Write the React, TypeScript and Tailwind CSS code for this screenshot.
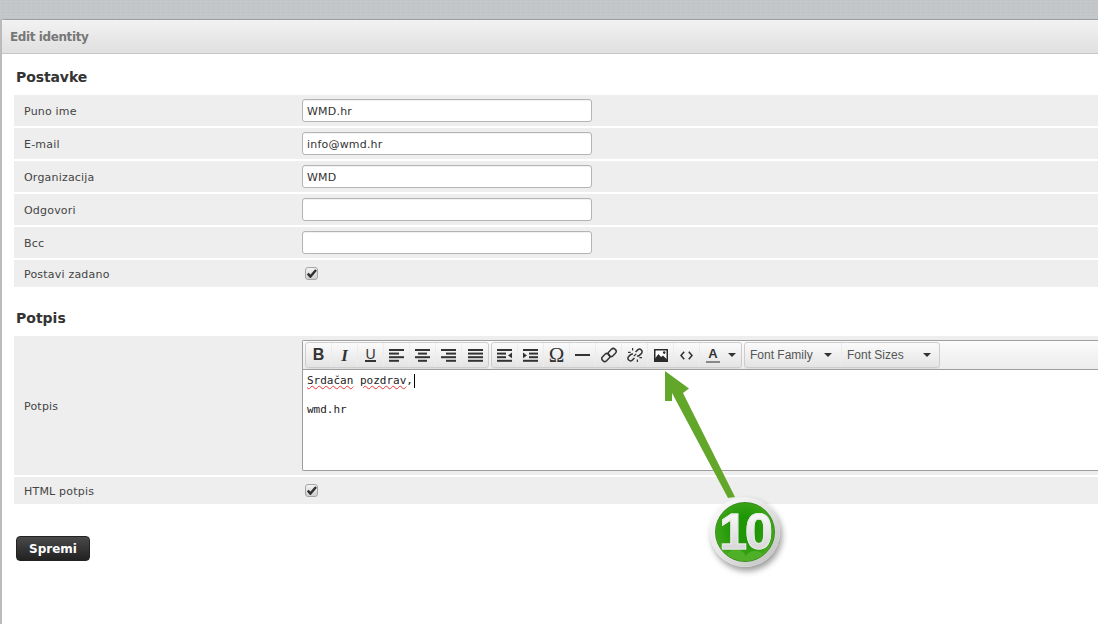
const fields = [
  { label: "Puno ime", value: "WMD.hr" },
  { label: "E-mail", value: "info@wmd.hr" },
  { label: "Organizacija", value: "WMD" },
  { label: "Odgovori", value: "" },
  { label: "Bcc", value: "" },
];

const labelCls = "pl-[10px] pt-[4px] text-[11px] tracking-[0.2px] text-[#444]";
const groupCls = "flex rounded-[3px] border border-[#cdcdcd] bg-gradient-to-b from-[#fbfbfb] to-[#e4e4e4] shadow-[0_1px_0_rgba(0,0,0,0.05)]";

const Check = () => (
  <span className="flex h-[13px] w-[13px] items-center justify-center rounded-[3px] border border-[#a5a5a5] bg-gradient-to-b from-[#f4f4f4] to-[#cfcfcf]">
    <svg width="10" height="9" viewBox="0 0 10 9">
      <path d="M0.8 4.6 L3.4 7.6 L9 1" fill="none" stroke="#2f2f2f" strokeWidth="2.4" />
    </svg>
  </span>
);

const ToolBtn = ({ children, w = "w-[26px]" }: { children: React.ReactNode; w?: string }) => (
  <div className={`flex h-[24px] ${w} items-center justify-center border-r border-[#ececec] text-[#333] last:border-r-0`}>{children}</div>
);

// bar icons: widths of the 4 rows and how they line up
const Align = ({ rows, side }: { rows: number[]; side: "l" | "c" | "r" }) => (
  <svg width="15" height="13" viewBox="0 0 15 13" fill="#333">
    {rows.map((w, i) => (
      <rect key={i} x={side === "l" ? 0 : side === "c" ? (15 - w) / 2 : 15 - w} y={i * 3.6} width={w} height="2" />
    ))}
  </svg>
);

const Indent = ({ flip }: { flip?: boolean }) => (
  <svg width="15" height="13" viewBox="0 0 15 13" fill="#333">
    <rect x="0" y="0" width="15" height="2" />
    <rect x={flip ? 6 : 0} y="3.6" width="9" height="2" />
    <rect x={flip ? 6 : 0} y="7.2" width="9" height="2" />
    <rect x="0" y="10.8" width="15" height="2" />
    <path d={flip ? "M0 3.5 L4 6.4 L0 9.3 Z" : "M15 3.5 L11 6.4 L15 9.3 Z"} />
  </svg>
);

const LinkIcon = () => (
  <svg width="16" height="16" viewBox="0 0 16 16" fill="none" stroke="#333" strokeWidth="1.5">
    <rect x="8.4" y="1.2" width="5.6" height="8.6" rx="2.6" transform="rotate(45 11.2 5.5)" />
    <rect x="2" y="6.2" width="5.6" height="8.6" rx="2.6" transform="rotate(45 4.8 10.5)" />
  </svg>
);

const UnlinkIcon = () => (
  <svg width="16" height="16" viewBox="0 0 16 16" fill="none" stroke="#333" strokeWidth="1.5">
    <path d="M8.6 5 L11 2.6 a2.6 2.6 0 0 1 3.6 3.6 L12.4 8.4 a2.6 2.6 0 0 1 -2.4 .6" />
    <path d="M7.4 11 L5 13.4 a2.6 2.6 0 0 1 -3.6 -3.6 L3.6 7.6 a2.6 2.6 0 0 1 2.4 -.6" />
    <path d="M5.6 1 V3.6 M1 5.4 H3.6 M10.4 15 V12.4 M15 10.6 H12.4 M6.8 9.2 L9.2 6.8" strokeWidth="1.2" />
  </svg>
);

const ImageIcon = () => (
  <svg width="14" height="13" viewBox="0 0 14 13">
    <rect x="0.75" y="0.75" width="12.5" height="11.5" fill="#fff" stroke="#2b2b2b" strokeWidth="1.5" />
    <path d="M1 12 V9.5 L4.5 5 L7 8 L9 6.5 L13 10.5 V12 Z" fill="#2b2b2b" />
    <circle cx="10.2" cy="3.6" r="1.3" fill="#2b2b2b" />
  </svg>
);

const CodeIcon = () => (
  <svg width="13" height="9" viewBox="0 0 13 9" fill="none" stroke="#333" strokeWidth="1.6">
    <path d="M4.2 0.8 L1 4.5 L4.2 8.2 M8.8 0.8 L12 4.5 L8.8 8.2" />
  </svg>
);

const Caret = () => <span className="h-0 w-0 border-x-[4px] border-t-[4px] border-x-transparent border-t-[#333]" />;

const Arrow = () => (
  <svg className="pointer-events-none absolute left-[650px] top-[365px]" width="100" height="140" viewBox="0 0 100 140">
    <path d="M15 6 L39 23.5 L33 28 L85 132 L78 133 L22 28 L22 36 H15 Z" fill="#62a72a" />
  </svg>
);

const Badge = () => (
  <div className="pointer-events-none absolute left-[710px] top-[497px] h-[70px] w-[70px] rounded-full bg-gradient-to-br from-[#ffffff] via-[#e2e3e2] to-[#bcbebc] p-[5px] shadow-[2px_4px_6px_rgba(0,0,0,0.4)]">
    <div className="relative flex h-full w-full items-center justify-center overflow-hidden rounded-full border border-[#3a8a1c] bg-[radial-gradient(circle_at_50%_45%,#1f9606_30%,#3aa516_65%,#7ccb4e_100%)]">
      <span className="absolute bottom-[-18px] left-[10px] h-[30px] w-[20px] rounded-full bg-[#4fb028]" />
      <span className="absolute bottom-[-20px] right-[8px] h-[30px] w-[22px] rounded-full bg-[#4fb028]" />
      <span className="relative bg-gradient-to-b from-white to-[#cfcfcf] bg-clip-text font-['Liberation_Sans',sans-serif] text-[50px] font-bold leading-none tracking-[-2px] text-transparent [-webkit-text-stroke:1px_#e8e8e8]">
        10
      </span>
    </div>
  </div>
);

export default function App() {
  return (
    <div className="relative h-[624px] w-[1098px] overflow-hidden bg-[#b9bbbd] font-['DejaVu_Sans',sans-serif]">
      <div className="h-[19px] bg-[#c3c7ca] bg-[repeating-linear-gradient(90deg,rgba(255,255,255,0.04)_0_2px,transparent_2px_5px),repeating-linear-gradient(0deg,rgba(0,0,0,0.02)_0_1px,transparent_1px_3px)]" />
      <div className="ml-[2px] h-[605px] rounded-tl-[3px] border-t border-[#9e9e9e] bg-white">
        <div className="flex h-[34px] items-center border-b border-[#c8c8c8] bg-gradient-to-b from-[#f2f2f2] to-[#e0e0e0] pl-[8px] pt-[1px] text-[12px] font-bold tracking-[-0.4px] text-[#777]">
          Edit identity
        </div>

        <div className="pl-[12px] pt-[14px]">
          <h2 className="mb-[9px] pl-[2px] text-[14px] font-bold leading-[18px] tracking-[-0.1px] text-[#333]">Postavke</h2>
          <div className="flex flex-col gap-[2px]">
            {fields.map((f) => (
              <div key={f.label} className="flex h-[31px] items-center bg-[#eeeeee]">
                <span className={`w-[288px] ${labelCls}`}>{f.label}</span>
                <input
                  readOnly
                  value={f.value}
                  className="h-[23px] w-[290px] rounded-[3px] border border-[#b4b4b4] bg-white px-[4px] pt-[2px] text-[11px] tracking-[0.2px] text-[#333] shadow-[inset_0_1px_1px_rgba(0,0,0,0.06)]"
                />
              </div>
            ))}
            <div className="flex h-[27px] items-center bg-[#eeeeee]">
              <span className={`w-[291px] ${labelCls}`}>Postavi zadano</span>
              <Check />
            </div>
          </div>

          <h2 className="mb-[9px] mt-[22px] pl-[2px] text-[14px] font-bold leading-[18px] text-[#333]">Potpis</h2>
          <div className="flex flex-col gap-[2px]">
            <div className="flex h-[139px] items-center bg-[#eeeeee]">
              <span className={`w-[288px] ${labelCls}`}>Potpis</span>
              <div className="flex h-[131px] flex-1 flex-col rounded-l-[2px] border border-r-0 border-[#9e9e9e] bg-white">
                <div className="flex h-[29px] items-center gap-[2px] border-b border-[#9e9e9e] bg-gradient-to-b from-[#fbfbfb] to-[#ececec] pl-[2px]">
                  <div className={groupCls}>
                    <ToolBtn><span className="font-['Liberation_Sans',sans-serif] text-[16px] font-bold leading-none">B</span></ToolBtn>
                    <ToolBtn><span className="font-['Liberation_Serif',serif] text-[17px] font-bold italic leading-none">I</span></ToolBtn>
                    <ToolBtn><span className="border-b-[2px] border-[#333] font-['Liberation_Sans',sans-serif] text-[14px] leading-[12px]">U</span></ToolBtn>
                    <ToolBtn><Align side="l" rows={[15, 10, 15, 10]} /></ToolBtn>
                    <ToolBtn><Align side="c" rows={[15, 9, 15, 9]} /></ToolBtn>
                    <ToolBtn><Align side="r" rows={[15, 10, 15, 10]} /></ToolBtn>
                    <ToolBtn><Align side="l" rows={[15, 15, 15, 15]} /></ToolBtn>
                  </div>
                  <div className={groupCls}>
                    <ToolBtn><Indent /></ToolBtn>
                    <ToolBtn><Indent flip /></ToolBtn>
                    <ToolBtn><span className="font-['Liberation_Serif',serif] text-[21px] leading-none">Ω</span></ToolBtn>
                    <ToolBtn><span className="h-[2px] w-[15px] bg-[#333]" /></ToolBtn>
                    <ToolBtn><LinkIcon /></ToolBtn>
                    <ToolBtn><UnlinkIcon /></ToolBtn>
                    <ToolBtn><ImageIcon /></ToolBtn>
                    <ToolBtn><CodeIcon /></ToolBtn>
                    <ToolBtn w="w-[41px]">
                      <span className="flex items-center gap-[8px] pl-[1px]">
                        <span className="border-b-[2px] border-[#888] px-[2px] font-['Liberation_Sans',sans-serif] text-[13px] font-bold leading-[14px]">A</span>
                        <Caret />
                      </span>
                    </ToolBtn>
                  </div>
                  <div className={`${groupCls} font-['Liberation_Sans',sans-serif] text-[12px] text-[#555]`}>
                    <div className="flex h-[24px] w-[97px] items-center justify-between border-r border-[#ececec] pl-[5px] pr-[9px]">
                      Font Family
                      <Caret />
                    </div>
                    <div className="flex h-[24px] w-[97px] items-center justify-between pl-[5px] pr-[8px]">
                      Font Sizes
                      <Caret />
                    </div>
                  </div>
                </div>
                <div className="px-[4px] pt-[4px] font-['DejaVu_Sans_Mono',monospace] text-[11px] leading-[14px] text-[#222]">
                  <p className="flex items-center">
                    <span className="underline decoration-wavy decoration-[#e33] decoration-1">Srdačan</span>
                    <span>&nbsp;</span>
                    <span className="underline decoration-wavy decoration-[#e33] decoration-1">pozdrav</span>
                    <span>,</span>
                    <span className="ml-[1px] h-[14px] w-px bg-black" />
                  </p>
                  <p className="h-[15px]">&nbsp;</p>
                  <p>wmd.hr</p>
                </div>
              </div>
            </div>
            <div className="flex h-[27px] items-center bg-[#eeeeee]">
              <span className={`w-[291px] ${labelCls}`}>HTML potpis</span>
              <Check />
            </div>
          </div>

          <button className="ml-[2px] mt-[32px] h-[25px] w-[74px] rounded-[4px] border border-[#222] bg-gradient-to-b from-[#4a4a4a] to-[#222] text-[12px] font-bold text-white">
            Spremi
          </button>
        </div>
      </div>
      <Arrow />
      <Badge />
    </div>
  );
}
